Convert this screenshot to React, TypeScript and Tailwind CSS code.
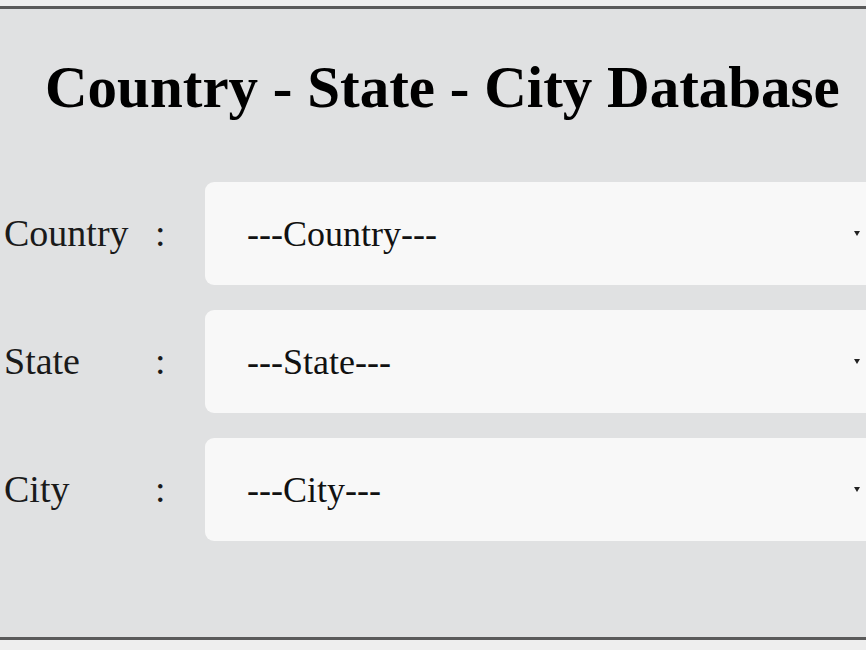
import React from "react";

const rows = [
  { label: "Country", placeholder: "---Country---" },
  { label: "State", placeholder: "---State---" },
  { label: "City", placeholder: "---City---" },
];

export default function App() {
  return (
    <div
      className="h-[650px] w-[866px] overflow-hidden bg-[#eeeeee] pt-[6px]"
      style={{ fontFamily: '"Liberation Serif", "Times New Roman", serif' }}
    >
      <div className="h-[634px] border-y-[3px] border-y-[#5a5a5a] bg-[#e0e1e2]">
        <h1 className="pt-[42px] pl-[45px] text-[59px] font-bold leading-[72px] text-black">
          Country - State - City Database
        </h1>
        <div className="mt-[59px] flex flex-col gap-[25px]">
          {rows.map((r) => (
            <div key={r.label} className="flex items-center">
              <span className="w-[155px] pl-[4px] text-[38px] text-[#1a1a1a]">{r.label}</span>
              <span className="w-[50px] text-[38px] text-[#1a1a1a]">:</span>
              <div className="flex h-[103px] w-[661px] items-center rounded-l-[9px] bg-[#f8f8f8] pl-[42px] pr-[6px]">
                <span className="flex-1 text-[36px] text-[#111]">{r.placeholder}</span>
                <svg width="6" height="5" viewBox="0 0 6 5">
                  <path d="M0 0H6L3 5Z" fill="#222" />
                </svg>
              </div>
            </div>
          ))}
        </div>
      </div>
    </div>
  );
}
